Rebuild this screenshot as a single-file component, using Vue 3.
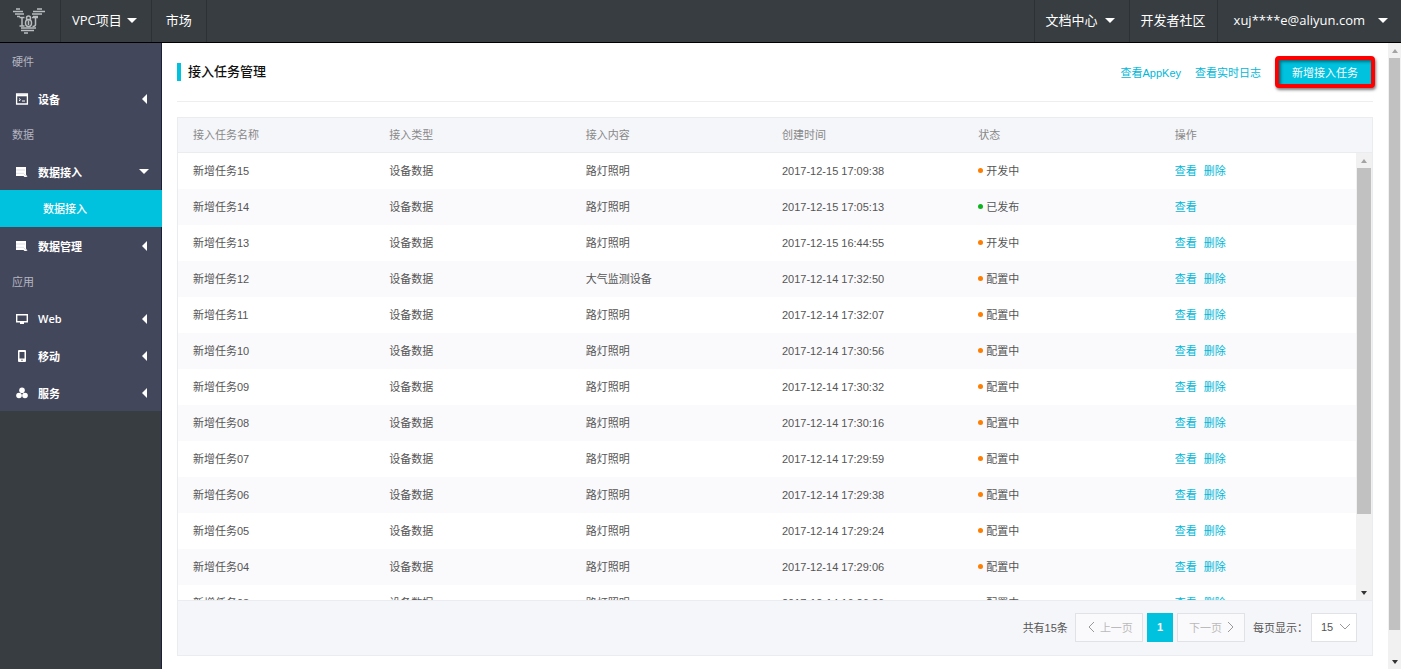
<template>
  <div class="console">
    <header class="topbar">
      <a class="logo" href="#" aria-label="IoT">
        <svg width="34" height="27" viewBox="0 0 34 27" fill="none" stroke="#b9bdbf" stroke-width="1.5">
          <path d="M4 1h4M1 3.500h10M3 6h9M5 8.500h3M25 1h5M21 3.500h12M20 6h10M21 8.500h5" />
          <path d="M7.500 9.500h5M10 9.500v8M7.500 18h5" />
          <circle cx="16.500" cy="10" r="2" />
          <ellipse cx="16.500" cy="15" rx="3" ry="3.500" />
          <path d="M16.500 13v4M20 9.500h6M23.500 9.500v7q0 2-3 2" />
          <path d="M9 20h15M9 22.500h13M12 25h4" />
        </svg>
      </a>
      <button class="nav-item">VPC项目<span class="caret"></span></button>
      <a class="nav-item" href="#">市场</a>
      <div class="spacer"></div>
      <button class="nav-item right">文档中心<span class="caret wide"></span></button>
      <a class="nav-item right" href="#">开发者社区</a>
      <button class="nav-item right account">xuj****e@aliyun.com<span class="caret account-caret"></span></button>
    </header>

    <div class="body">
      <aside class="sidebar">
        <nav class="menu">
          <template v-for="group in menu" :key="group.title">
            <h2 class="menu-title">{{ group.title }}</h2>
            <template v-for="item in group.items" :key="item.name">
              <button class="menu-item">
                <svg v-if="item.icon === 'device'" class="menu-icon" viewBox="0 0 14 14">
                  <path d="M1.600 2h10.800v10H1.600z" fill="none" stroke="#fff" stroke-width="1.300" />
                  <path d="M2 3.300h10" stroke="#fff" stroke-width="2" />
                  <path d="M4 6.500l1.500 1.200L4 9M7 9h3" fill="none" stroke="#fff" />
                </svg>
                <svg v-else-if="item.icon === 'data'" class="menu-icon" viewBox="0 0 14 14">
                  <path d="M1 2h10v7.500l1.500 2.500h-3l-1-1H1z" fill="#fff" />
                  <path d="M1 5h9M1 8.300h8M9 9l3 3" stroke="#c5c7d2" stroke-width=".6" />
                </svg>
                <svg v-else-if="item.icon === 'web'" class="menu-icon" viewBox="0 0 14 14">
                  <path d="M1.700 2.700h10.600v7H1.700z" fill="none" stroke="#fff" stroke-width="1.400" />
                  <path d="M5 10h4v2H5z" fill="#fff" />
                </svg>
                <svg v-else-if="item.icon === 'mobile'" class="menu-icon" viewBox="0 0 14 14">
                  <rect x="3" y="1" width="8" height="12" rx="1" fill="#fff" />
                  <path d="M4.500 3h5v6.500h-5z" fill="#43475b" />
                  <circle cx="7" cy="11.300" r=".7" fill="#43475b" />
                </svg>
                <svg v-else class="menu-icon" viewBox="0 0 14 14" fill="#fff">
                  <circle cx="7" cy="4.300" r="2.800" />
                  <circle cx="4" cy="9.500" r="2.800" />
                  <circle cx="10" cy="9.500" r="2.800" />
                </svg>
                <span>{{ item.name }}</span>
                <span class="arrow" :class="{ open: item.children }"></span>
              </button>
              <a v-for="child in item.children" :key="child" class="sub-item" href="#">{{ child }}</a>
            </template>
          </template>
        </nav>
      </aside>

      <main class="content">
        <div class="title-bar">
          <h1>接入任务管理</h1>
          <a href="#">查看AppKey</a>
          <a href="#">查看实时日志</a>
          <button class="btn-add">新增接入任务</button>
        </div>

        <section class="panel">
          <div class="table-area">
            <table>
              <thead>
                <tr>
                  <th v-for="name in columns" :key="name">{{ name }}</th>
                </tr>
              </thead>
              <tbody>
                <tr v-for="task in tasks" :key="task.name">
                  <td>{{ task.name }}</td>
                  <td>设备数据</td>
                  <td>{{ task.content }}</td>
                  <td>{{ task.time }}</td>
                  <td><span class="dot" :class="{ done: task.status === '已发布' }"></span>{{ task.status }}</td>
                  <td class="actions">
                    <a href="#">查看</a>
                    <a v-if="task.status !== '已发布'" href="#">删除</a>
                  </td>
                </tr>
              </tbody>
            </table>
            <div class="scroll-column">
              <div class="scroll-head"></div>
              <div class="scrollbar">
                <span class="scroll-up"></span>
                <div class="track"><div class="thumb table-thumb"></div></div>
                <span class="scroll-down"></span>
              </div>
            </div>
          </div>

          <footer class="pager">
            <span class="total">共有15条</span>
            <button class="page-btn" disabled>
              <svg width="8" height="12" viewBox="0 0 8 12"><path d="M7 1L2 6l5 5" /></svg>上一页
            </button>
            <button class="page-btn current">1</button>
            <button class="page-btn" disabled>
              下一页<svg width="8" height="12" viewBox="0 0 8 12"><path d="M1 1l5 5-5 5" /></svg>
            </button>
            <label for="page-size">每页显示：</label>
            <div class="size-box">
              <select id="page-size" v-model="pageSize">
                <option :value="15">15</option>
              </select>
              <svg width="12" height="8" viewBox="0 0 12 8"><path d="M1 1l5 5 5-5" /></svg>
            </div>
          </footer>
        </section>
      </main>

      <div class="scrollbar page-scroll">
        <span class="scroll-up"></span>
        <div class="track"><div class="thumb page-thumb"></div></div>
        <span class="scroll-down"></span>
      </div>
    </div>
  </div>
</template>

<script setup>
import { ref } from 'vue';

const pageSize = ref(15);

const menu = [
  { title: '硬件', items: [{ name: '设备', icon: 'device' }] },
  {
    title: '数据',
    items: [
      { name: '数据接入', icon: 'data', children: ['数据接入'] },
      { name: '数据管理', icon: 'data' }
    ]
  },
  {
    title: '应用',
    items: [
      { name: 'Web', icon: 'web' },
      { name: '移动', icon: 'mobile' },
      { name: '服务', icon: 'service' }
    ]
  }
];

const columns = ['接入任务名称', '接入类型', '接入内容', '创建时间', '状态', '操作'];

const tasks = [
  { name: '新增任务15', content: '路灯照明', time: '2017-12-15 17:09:38', status: '开发中' },
  { name: '新增任务14', content: '路灯照明', time: '2017-12-15 17:05:13', status: '已发布' },
  { name: '新增任务13', content: '路灯照明', time: '2017-12-15 16:44:55', status: '开发中' },
  { name: '新增任务12', content: '大气监测设备', time: '2017-12-14 17:32:50', status: '配置中' },
  { name: '新增任务11', content: '路灯照明', time: '2017-12-14 17:32:07', status: '配置中' },
  { name: '新增任务10', content: '路灯照明', time: '2017-12-14 17:30:56', status: '配置中' },
  { name: '新增任务09', content: '路灯照明', time: '2017-12-14 17:30:32', status: '配置中' },
  { name: '新增任务08', content: '路灯照明', time: '2017-12-14 17:30:16', status: '配置中' },
  { name: '新增任务07', content: '路灯照明', time: '2017-12-14 17:29:59', status: '配置中' },
  { name: '新增任务06', content: '路灯照明', time: '2017-12-14 17:29:38', status: '配置中' },
  { name: '新增任务05', content: '路灯照明', time: '2017-12-14 17:29:24', status: '配置中' },
  { name: '新增任务04', content: '路灯照明', time: '2017-12-14 17:29:06', status: '配置中' },
  { name: '新增任务03', content: '路灯照明', time: '2017-12-14 16:26:36', status: '配置中' }
];
</script>

<style>
body {
  margin: 0;
}
</style>

<style scoped>
.console {
  height: 100vh;
  display: flex;
  flex-direction: column;
  overflow: hidden;
  font-family: "Liberation Sans", "Noto Sans CJK SC", sans-serif;
  font-size: 11px;
  color: #555;
  background: #fff;
}
.console * {
  box-sizing: border-box;
}
a {
  color: #00b7d8;
  text-decoration: none;
}
button,
select {
  border: none;
  background: none;
  padding: 0;
  font: inherit;
  color: inherit;
}

/* top bar */
.topbar {
  flex: none;
  display: flex;
  height: 43px;
  background: #373d41;
  border-bottom: 1px solid #000;
  color: #fff;
  font-family: "Open Sans", "Noto Sans CJK SC", sans-serif;
  font-size: 13px;
}
.logo {
  width: 61px;
  display: flex;
  align-items: center;
  padding-left: 12px;
  border-right: 1px solid #2c3135;
}
.nav-item {
  display: flex;
  align-items: center;
  padding: 0 14px 3px 11px;
  border-right: 1px solid #2c3135;
  color: #fff;
}
a.nav-item {
  padding: 0 14px 3px;
}
.nav-item.right {
  border-right: none;
  border-left: 1px solid #2c3135;
  padding: 0 14px 3px 11px;
}
a.nav-item.right {
  padding: 0 11px 3px;
}
.nav-item.right.account {
  padding: 0 13px 3px 16px;
}
.spacer {
  flex: 1;
}
.caret {
  margin: 2px 0 0 5px;
  border: 5px solid transparent;
  border-top-color: #fff;
  border-bottom: none;
}
.caret.wide {
  margin-left: 7px;
}
.account-caret {
  margin-left: 13px;
}

.body {
  flex: 1;
  display: flex;
  min-height: 0;
}

/* side menu */
.sidebar {
  flex: none;
  width: 162px;
  background: #373d41;
  border-right: 1px solid #1d1f38;
  font-family: "Open Sans", "Noto Sans CJK SC", sans-serif;
}
.menu {
  display: flex;
  flex-direction: column;
  padding-top: 1px;
  background: #43475b;
}
.menu-title {
  margin: 0;
  padding-left: 12px;
  line-height: 36px;
  font-size: 11px;
  font-weight: 400;
  color: #b4b6c0;
}
.menu-item {
  display: flex;
  align-items: center;
  height: 37px;
  padding: 0 14px 0 15px;
  color: #fff;
  font-weight: 600;
}
.menu-icon {
  width: 14px;
  height: 14px;
  margin-right: 9px;
}
.arrow {
  margin-left: auto;
  border: 5px solid transparent;
  border-right-color: #fff;
  border-left: none;
}
.arrow.open {
  margin-right: -2px;
  border: 5px solid transparent;
  border-top-color: #fff;
  border-bottom: none;
}
.sub-item {
  margin-right: -1px;
  padding-left: 43px;
  line-height: 37px;
  color: #fff;
  font-weight: 500;
  background: #00c1de;
}

/* page content */
.content {
  flex: 1;
  min-width: 0;
  display: flex;
  flex-direction: column;
  padding: 0 15px 13px;
}
.title-bar {
  flex: none;
  display: flex;
  align-items: center;
  gap: 14px;
  height: 59px;
  border-bottom: 1px solid #eee;
}
.title-bar h1 {
  margin: 0 auto 0 0;
  padding-left: 7px;
  border-left: 4px solid #00c1de;
  line-height: 18px;
  font-size: 13px;
  font-weight: 500;
  color: #111;
}
.btn-add {
  height: 32px;
  margin-right: -2px;
  padding: 0 13px;
  border: 4px solid #f00;
  border-radius: 4px;
  background: #00c1de;
  box-shadow: 1px 2px 3px rgba(0, 0, 0, 0.5), inset 2px 2px 3px rgba(0, 0, 0, 0.4);
  color: #fff;
}
.panel {
  flex: 1;
  min-height: 0;
  display: flex;
  flex-direction: column;
  margin-top: 15px;
  border: 1px solid #ebecf0;
}
.table-area {
  flex: 1;
  min-height: 0;
  display: flex;
  align-items: flex-start;
  overflow: hidden;
}
table {
  flex: 1;
  width: 100%;
  min-width: 0;
  table-layout: fixed;
  border-collapse: separate;
  border-spacing: 0;
}
th,
td {
  height: 36px;
  padding: 0 0 0 15px;
  text-align: left;
  font-weight: 400;
  line-height: 16px;
}
th {
  height: 35px;
  background: #f5f6fa;
  border-bottom: 1px solid #ebecf0;
  color: #888;
}
tbody tr:nth-child(even) {
  background: #fafafc;
}
.dot {
  display: inline-block;
  width: 5px;
  height: 5px;
  margin-right: 3px;
  border-radius: 50%;
  background: #ff7d00;
  vertical-align: 2px;
}
.dot.done {
  background: #0db41e;
}
.actions a + a {
  margin-left: 7px;
}

/* scroll bars */
.scroll-column {
  flex: none;
  align-self: stretch;
  width: 16px;
  display: flex;
  flex-direction: column;
}
.scroll-head {
  flex: none;
  height: 35px;
  background: #f5f6fa;
  border-bottom: 1px solid #ebecf0;
}
.scrollbar {
  flex: 1;
  display: flex;
  flex-direction: column;
  align-items: center;
  background: #f1f1f1;
}
.page-scroll {
  flex: none;
  width: 13px;
}
.track {
  flex: 1;
  align-self: stretch;
  margin: 0 1px;
}
.thumb {
  background: #c1c1c1;
}
.table-thumb {
  height: 83%;
}
.page-thumb {
  height: 96%;
}
.scroll-up,
.scroll-down {
  margin: 6px 0 5px;
  border: 3px solid transparent;
}
.scroll-up {
  border-bottom: 4px solid #a3a3a3;
  border-top: none;
}
.scroll-down {
  border-top: 4px solid #333;
  border-bottom: none;
}

/* pagination */
.pager {
  flex: none;
  display: flex;
  align-items: center;
  justify-content: flex-end;
  height: 55px;
  padding: 0 15px 2px 0;
  background: #f5f6fa;
  border-top: 1px solid #ebecf0;
}
.total {
  margin-right: 7px;
}
.page-btn {
  display: flex;
  align-items: center;
  gap: 5px;
  height: 29px;
  margin-right: 4px;
  padding: 0 9px 0 11px;
  border: 1px solid #e1e2e6;
  background: #fafafc;
  color: #bbb;
}
.page-btn.current {
  padding: 0 10px;
  border: none;
  background: #00c1de;
  color: #fff;
  font-weight: 700;
}
.pager svg {
  fill: none;
  stroke: #999;
}
.pager label {
  margin: 0 3px 0 4px;
}
.size-box {
  display: flex;
  align-items: center;
  height: 29px;
  padding: 0 5px 0 9px;
  border: 1px solid #e1e2e6;
  background: #fff;
}
select {
  appearance: none;
  width: 18px;
}
</style>
